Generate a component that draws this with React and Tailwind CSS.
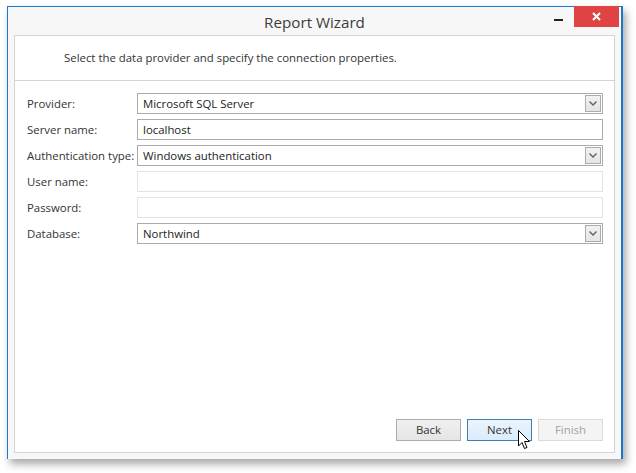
import React from "react";

const font = { fontFamily: '"Open Sans", "Noto Sans", sans-serif' };

function Chevron() {
  return (
    <div className="absolute right-[1px] top-[1px] bottom-[1px] w-[16px] border border-[#acacac] bg-gradient-to-b from-[#f2f2f2] to-[#e5e5e5] flex items-center justify-center">
      <svg width="8" height="5" viewBox="0 0 8 5">
        <path d="M0.5 0.5 L4 4 L7.5 0.5" fill="none" stroke="#606060" strokeWidth="1.4" />
      </svg>
    </div>
  );
}

function Field({ label, value, combo, disabled }) {
  return (
    <div className="flex items-center h-[21px]">
      <div className="w-[110px] shrink-0 whitespace-nowrap text-[11.4px] text-[#333]">{label}</div>
      <div
        className={
          "relative flex-1 h-[21px] bg-white flex items-center pl-[5px] text-[11.4px] text-[#222] border " +
          (disabled ? "border-[#e3e3e3]" : "border-[#ababab]")
        }
      >
        {value}
        {combo && <Chevron />}
      </div>
    </div>
  );
}

export default function App() {
  return (
    <div className="w-[636px] h-[473px] bg-white relative overflow-hidden" style={font}>
      <div className="absolute left-[7px] top-[6px] w-[616px] h-[453px] bg-[#f7f7f7] border-l border-t border-r-2 border-[#1979ca] shadow-[3px_5px_8px_rgba(0,0,0,0.35)] flex flex-col">
        <div className="relative h-[28px] flex items-center justify-center">
          <div className="text-[15.2px] text-[#3c3c3c] leading-none mt-[3px]">Report Wizard</div>
          <div className="absolute right-[2px] top-[-1px] w-[45px] h-[21px] bg-[#e04343] flex items-center justify-center">
            <svg width="9" height="9" viewBox="0 0 9 9">
              <path d="M1 1 L8 8 M8 1 L1 8" stroke="#fff" strokeWidth="2" />
            </svg>
          </div>
          <div className="absolute right-[58px] top-[12px] w-[9px] h-[2px] bg-[#222]" />
        </div>
        <div className="ml-[6px] mr-[6px] h-[418px] bg-white border border-[#d4d4d4] flex flex-col">
          <div className="h-[45px] border-b border-[#d4d4d4] flex items-center pl-[49px] text-[11.4px] text-[#333]">
            Select the data provider and specify the connection properties.
          </div>
          <div className="flex flex-col gap-[5px] pt-[12px] pl-[12px] pr-[11px]">
            <Field label="Provider:" value="Microsoft SQL Server" combo />
            <Field label="Server name:" value="localhost" />
            <Field label="Authentication type:" value="Windows authentication" combo />
            <Field label="User name:" value="" disabled />
            <Field label="Password:" value="" disabled />
            <Field label="Database:" value="Northwind" combo />
          </div>
          <div className="flex-1" />
          <div className="flex justify-end gap-[6px] pr-[11px] pb-[11px]">
            <div className="w-[65px] h-[22px] border border-[#acacac] bg-gradient-to-b from-[#f0f0f0] to-[#e5e5e5] flex items-center justify-center text-[11.4px] text-[#333]">
              Back
            </div>
            <div className="relative w-[65px] h-[22px] border border-[#3c7fb1] bg-gradient-to-b from-[#eaf4fc] to-[#dcecfc] flex items-center justify-center text-[11.4px] text-[#333]">
              Next
              <svg className="absolute left-[50px] top-[10px]" width="14" height="22" viewBox="0 0 14 22">
                <path d="M0.5 0.5 L0.5 16 L4 12.5 L6.5 18.5 L9 17.5 L6.5 11.5 L11.5 11.5 Z" fill="#fff" stroke="#000" strokeWidth="1" strokeLinejoin="miter" />
              </svg>
            </div>
            <div className="w-[65px] h-[22px] border border-[#dadada] bg-[#f4f4f4] flex items-center justify-center text-[11.4px] text-[#a3a3a3]">
              Finish
            </div>
          </div>
        </div>
      </div>
    </div>
  );
}
